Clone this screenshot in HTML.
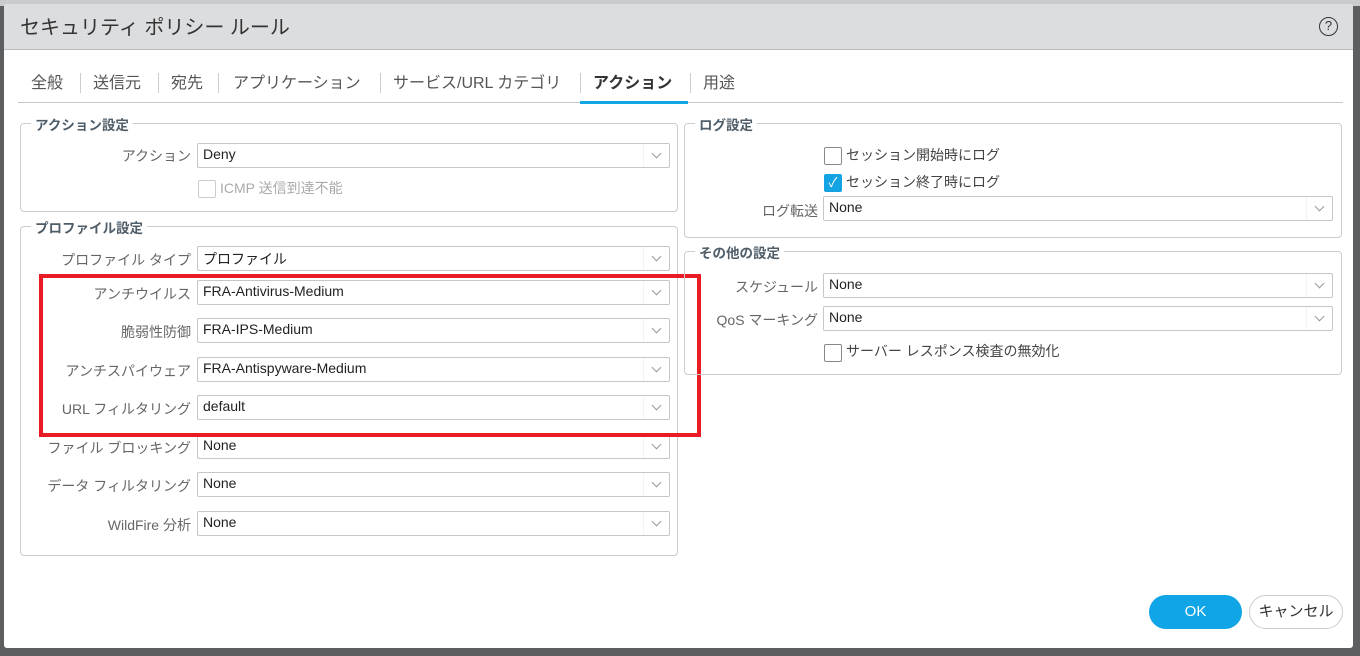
<!DOCTYPE html>
<html><head><meta charset="utf-8"><style>
*{box-sizing:border-box;margin:0;padding:0}
body{width:1360px;height:656px;background:#5d5e60;position:relative;overflow:hidden;font-family:"Liberation Sans","Noto Sans CJK JP",sans-serif;color:#333}
.a{position:absolute}
#topstrip{left:0;top:0;width:1360px;height:6px;background:#c9cbcd}
#dlg{left:4px;top:4px;width:1349px;height:644px;background:#fff;border-radius:3px;overflow:hidden}
#hdr{left:0;top:0;width:100%;height:46px;background:#dcdddf;border-bottom:1px solid #b8bcc0}
#title{left:16px;top:7px;font-size:20px;color:#333}
.help{left:1315px;top:13px;width:19px;height:19px;border:1.5px solid #333;border-radius:50%;font-size:13px;text-align:center;line-height:16px;color:#333}
.tab{top:65px;font-size:16px;color:#555;white-space:nowrap}
.sep{top:69px;width:1px;height:20px;background:#ccc}
.fs{border:1px solid #ccc;border-radius:4px}
.lg{font-size:13.5px;font-weight:bold;color:#4f5d68;background:#fff;padding:0 4px;white-space:nowrap}
.lbl{font-size:14px;color:#666;text-align:right;white-space:nowrap}
.sel{height:25px;border:1px solid #c6c6c6;border-radius:2px;font-size:14px;color:#222;padding:2px 0 0 5px;background:#fff}
.sel::after{content:"";position:absolute;right:0;top:0;width:25px;height:23px;border-left:1px solid #f3f3f3}
.sel i{position:absolute;right:9px;top:6px;width:7px;height:7px;border-right:1px solid #999;border-bottom:1px solid #999;transform:rotate(45deg)}
.cb{width:18px;height:18px;border:1px solid #888;border-radius:2px;background:#fff}
.cbt{font-size:14px;color:#444;white-space:nowrap}
</style></head><body>
<div class="a" id="topstrip"></div>
<div class="a" id="dlg">
 <div class="a" id="hdr"><div class="a" id="title">セキュリティ ポリシー ルール</div><div class="a help">?</div></div>
 <div class="a tab" style="left:27px">全般</div>
 <div class="a sep" style="left:76px"></div>
 <div class="a tab" style="left:89px">送信元</div>
 <div class="a sep" style="left:154px"></div>
 <div class="a tab" style="left:167px">宛先</div>
 <div class="a sep" style="left:214px"></div>
 <div class="a tab" style="left:229px">アプリケーション</div>
 <div class="a sep" style="left:376px"></div>
 <div class="a tab" style="left:389px">サービス/URL カテゴリ</div>
 <div class="a sep" style="left:576px"></div>
 <div class="a tab" style="left:589px;font-weight:bold;color:#333">アクション</div>
 <div class="a sep" style="left:686px"></div>
 <div class="a tab" style="left:699px">用途</div>
 <div class="a" style="left:14px;top:98px;width:1325px;height:1px;background:#c4c8cc"></div>
 <div class="a" style="left:576px;top:97px;width:108px;height:3px;background:#12a5e4"></div>

 <div class="a fs" style="left:16px;top:119px;width:658px;height:89px"></div>
 <div class="a lg" style="left:27px;top:110px">アクション設定</div>
 <div class="a lbl" style="left:40px;top:142px;width:147px">アクション</div>
 <div class="a sel" style="left:193px;top:139px;width:473px">Deny<i></i></div>
 <div class="a cb" style="left:194px;top:176px;border-color:#ccc"></div>
 <div class="a cbt" style="left:216px;top:174px;color:#aaa">ICMP 送信到達不能</div>

 <div class="a fs" style="left:16px;top:222px;width:658px;height:330px"></div>
 <div class="a lg" style="left:27px;top:213px">プロファイル設定</div>
 <div class="a lbl" style="left:20px;top:246px;width:167px">プロファイル タイプ</div>
 <div class="a sel" style="left:193px;top:242px;width:473px">プロファイル<i></i></div>
 <div class="a lbl" style="left:20px;top:280px;width:167px">アンチウイルス</div>
 <div class="a sel" style="left:193px;top:276px;width:473px">FRA-Antivirus-Medium<i></i></div>
 <div class="a lbl" style="left:20px;top:318px;width:167px">脆弱性防御</div>
 <div class="a sel" style="left:193px;top:314px;width:473px">FRA-IPS-Medium<i></i></div>
 <div class="a lbl" style="left:20px;top:357px;width:167px">アンチスパイウェア</div>
 <div class="a sel" style="left:193px;top:353px;width:473px">FRA-Antispyware-Medium<i></i></div>
 <div class="a lbl" style="left:20px;top:395px;width:167px">URL フィルタリング</div>
 <div class="a sel" style="left:193px;top:391px;width:473px">default<i></i></div>
 <div class="a lbl" style="left:20px;top:434px;width:167px">ファイル ブロッキング</div>
 <div class="a sel" style="left:193px;top:430px;width:473px">None<i></i></div>
 <div class="a lbl" style="left:20px;top:472px;width:167px">データ フィルタリング</div>
 <div class="a sel" style="left:193px;top:468px;width:473px">None<i></i></div>
 <div class="a lbl" style="left:20px;top:511px;width:167px">WildFire 分析</div>
 <div class="a sel" style="left:193px;top:507px;width:473px">None<i></i></div>
 <div class="a" style="left:35px;top:270px;width:662px;height:163px;border:4px solid #e81c25"></div>

 <div class="a fs" style="left:680px;top:119px;width:658px;height:115px"></div>
 <div class="a lg" style="left:691px;top:110px">ログ設定</div>
 <div class="a cb" style="left:820px;top:143px"></div>
 <div class="a cbt" style="left:842px;top:141px">セッション開始時にログ</div>
 <div class="a cb" style="left:820px;top:170px;background:#14a3e3;border-color:#14a3e3;color:#fff;font-size:13px;text-align:center;line-height:16px">✓</div>
 <div class="a cbt" style="left:842px;top:168px">セッション終了時にログ</div>
 <div class="a lbl" style="left:700px;top:197px;width:114px">ログ転送</div>
 <div class="a sel" style="left:819px;top:192px;width:510px">None<i></i></div>

 <div class="a fs" style="left:680px;top:247px;width:658px;height:124px"></div>
 <div class="a lg" style="left:691px;top:238px">その他の設定</div>
 <div class="a lbl" style="left:700px;top:273px;width:114px">スケジュール</div>
 <div class="a sel" style="left:819px;top:269px;width:510px">None<i></i></div>
 <div class="a lbl" style="left:700px;top:306px;width:114px">QoS マーキング</div>
 <div class="a sel" style="left:819px;top:302px;width:510px">None<i></i></div>
 <div class="a cb" style="left:820px;top:340px"></div>
 <div class="a cbt" style="left:842px;top:337px">サーバー レスポンス検査の無効化</div>

 <div class="a" style="left:1145px;top:591px;width:93px;height:34px;border-radius:17px;background:#0fa5e6;color:#fff;font-size:15px;text-align:center;line-height:34px">OK</div>
 <div class="a" style="left:1245px;top:591px;width:94px;height:34px;border-radius:17px;border:1px solid #ccc;color:#333;font-size:15px;text-align:center;line-height:32px">キャンセル</div>
</div>
</body></html>
